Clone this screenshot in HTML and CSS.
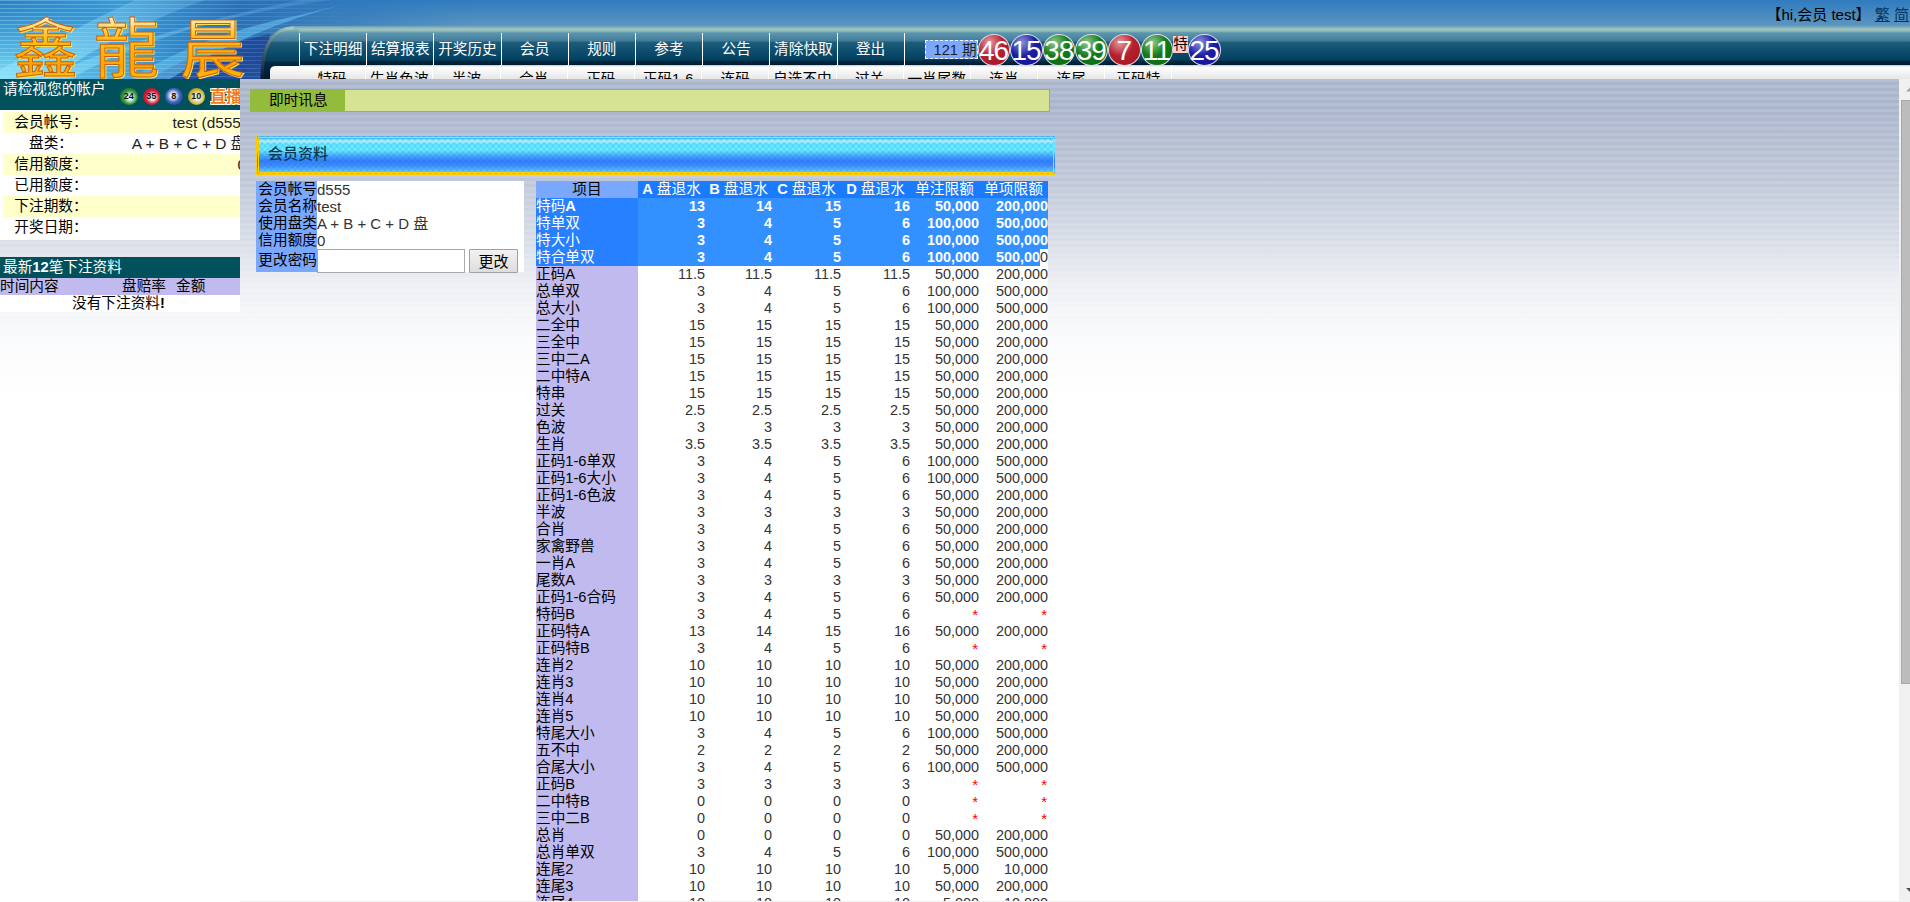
FILE: index.html
```html
<!DOCTYPE html>
<html lang="zh-CN">
<head>
<meta charset="utf-8">
<title>会员资料</title>
<link rel="stylesheet" href="styles.css">
</head>
<body>
<header class="top">
  <svg class="banner" width="480" height="79" viewBox="0 0 480 79">
    <defs>
      <linearGradient id="sky" x1="0" y1="0" x2="1" y2="0">
        <stop offset="0" stop-color="#2c7fc4"/><stop offset=".25" stop-color="#3a9ad8"/><stop offset=".5" stop-color="#2b6fb8"/><stop offset="1" stop-color="#2f7bbf" stop-opacity="0"/>
      </linearGradient>
      <radialGradient id="glow" cx="0" cy="1" r="1"><stop offset="0" stop-color="#7fe6fb"/><stop offset="1" stop-color="#4db8ea" stop-opacity="0"/></radialGradient>
      <linearGradient id="ray" x1="0" y1="1" x2="1" y2="0"><stop offset="0" stop-color="#8be4fa" stop-opacity=".85"/><stop offset="1" stop-color="#7cc4ec" stop-opacity=".25"/></linearGradient>
      <linearGradient id="gold" x1="0" y1="0" x2="0" y2="1">
        <stop offset="0" stop-color="#e08a30"/><stop offset=".2" stop-color="#fff4dc"/><stop offset=".42" stop-color="#ffc020"/><stop offset=".75" stop-color="#ffa200"/><stop offset="1" stop-color="#ffe030"/>
      </linearGradient>
      <pattern id="scan" width="4" height="4" patternUnits="userSpaceOnUse"><rect width="4" height="1" fill="#9fe0fa" opacity=".4"/></pattern>
      <linearGradient id="fade"><stop offset="0" stop-color="#fff"/><stop offset=".45" stop-color="#999"/><stop offset=".75" stop-color="#000"/></linearGradient>
      <mask id="left"><rect width="480" height="79" fill="url(#fade)"/></mask>
      <clipPath id="edge"><path d="M0 0 H480 V26 H292 Q262 30 262 79 H0Z"/></clipPath>
      <linearGradient id="teal" x1="0" y1="0" x2="0" y2="1"><stop offset="0" stop-color="#92bab9"/><stop offset=".08" stop-color="#5b95b0"/><stop offset=".24" stop-color="#427c98"/><stop offset=".27" stop-color="#1f5d7c"/><stop offset=".5" stop-color="#0b4a6a"/><stop offset=".64" stop-color="#04405f"/><stop offset=".67" stop-color="#022b46"/><stop offset="1" stop-color="#021a2c"/></linearGradient>
      <linearGradient id="rim" x1="0" y1="1" x2=".8" y2="0"><stop offset="0" stop-color="#071c33"/><stop offset="1" stop-color="#a5c8c0"/></linearGradient>
      <linearGradient id="tab" x1="0" y1="0" x2="0" y2="1"><stop offset="0" stop-color="#fff"/><stop offset="1" stop-color="#e6e6e6"/></linearGradient>
    </defs>
    <path d="M262 79 Q262 29 292 29 H299 V79Z" fill="url(#teal)"/>
    <g clip-path="url(#edge)">
      <rect width="480" height="79" fill="url(#sky)"/>
      <rect width="190" height="79" fill="url(#glow)"/>
      <path d="M0 79 L0 70 Q70 30 135 0 L205 0 Q120 30 50 79Z" fill="url(#ray)"/>
      <path d="M70 79 Q170 22 330 0 L300 0 Q150 30 40 79Z" fill="url(#ray)" opacity=".7"/>
      <path d="M150 79 Q200 48 270 34 L262 79Z" fill="#1d3a90" opacity=".7"/>
      <path d="M130 79 Q200 35 300 15 L345 4 Q250 28 170 79Z" fill="#62bfee" opacity=".6"/>
      <rect width="480" height="79" fill="url(#scan)" mask="url(#left)"/>
    </g>
    <path d="M262 79 Q262 28 294 28" fill="none" stroke="url(#rim)" stroke-width="3"/>
    <path d="M270 79 V71 Q270 66 276 66 H300 V79Z" fill="url(#tab)"/>
    <g class="brand">
      <text x="13" y="72">鑫</text>
      <text x="94" y="72">龍</text>
      <text x="180" y="72">晨</text>
    </g>
  </svg>
  <div class="hello">【hi,会员 test】 <a>繁</a> <a>简</a></div>
  <nav class="menu">
    <a>下注明细</a><a>结算报表</a><a>开奖历史</a><a>会员</a><a>规则</a><a>参考</a><a>公告</a><a>清除快取</a><a>登出</a>
    <div class="draw">
      <span class="issue">121 期</span>
      <i class="ball red">46</i><i class="ball blue">15</i><i class="ball green">38</i><i class="ball green">39</i><i class="ball red">7</i><i class="ball green">11</i><span class="special">特</span><i class="ball blue">25</i>
    </div>
  </nav>
  <nav class="submenu">
    <a>特码</a><a>生肖色波</a><a>半波</a><a>合肖</a><a>正码</a><a>正码1-6</a><a>连码</a><a>自选不中</a><a>过关</a><a>一肖尾数</a><a>连肖</a><a>连尾</a><a>正码特</a>
  </nav>
</header>
<div class="frames">
  <aside class="side">
    <div class="account-head"><span>请检视您的帐户</span>
      <div class="minis"><i class="mini m1">24</i><i class="mini m2">35</i><i class="mini m3">8</i><i class="mini m4">10</i></div><b class="live">直播</b>
    </div>
    <div class="account">
      <div class="line"><span>会员帐号：</span><em>test (d555)</em></div>
      <div class="line"><span>盘类：</span><em>A + B + C + D 盘</em></div>
      <div class="line"><span>信用额度：</span><em>0</em></div>
      <div class="line"><span>已用额度：</span></div>
      <div class="line"><span>下注期数：</span></div>
      <div class="line"><span>开奖日期：</span></div>
    </div>
    <div class="recent-head">最新<b>12</b>笔下注资料</div>
    <div class="recent-cols"><span>时间内容</span><span>盘赔率</span><span>金额</span></div>
    <div class="recent-none">没有下注资料<b>!</b></div>
  </aside>
  <main class="main">
    <div class="notice"><span>即时讯息</span></div>
    <h1 class="title">会员资料</h1>
    <div class="content">
      <table class="info">
        <tr><th>会员帐号<td>d555
        <tr><th>会员名称<td>test
        <tr><th>使用盘类<td>A + B + C + D 盘
        <tr><th>信用额度<td>0
        <tr class="pw"><th>更改密码<td><div class="form"><input type="text"><button>更改</button></div>
      </table>
      <table class="limits">
        <colgroup><col class="c0"><col class="c1"><col class="c1"><col class="c2"><col class="c2"><col class="c2"><col class="c2"></colgroup>
        <tr class="head"><th>项目<th><b>A</b> 盘退水<th><b>B</b> 盘退水<th><b>C</b> 盘退水<th><b>D</b> 盘退水<th>单注限额<th>单项限额
        <tr class="sel"><th>特码<b>A</b><td>13<td>14<td>15<td>16<td>50,000<td>200,000
        <tr class="sel"><th>特单双<td>3<td>4<td>5<td>6<td>100,000<td>500,000
        <tr class="sel"><th>特大小<td>3<td>4<td>5<td>6<td>100,000<td>500,000
        <tr class="sel"><th>特合单双<td>3<td>4<td>5<td>6<td>100,000<td>500,00<span class="unsel">0</span>
        <tr><th>正码A<td>11.5<td>11.5<td>11.5<td>11.5<td>50,000<td>200,000
        <tr><th>总单双<td>3<td>4<td>5<td>6<td>100,000<td>500,000
        <tr><th>总大小<td>3<td>4<td>5<td>6<td>100,000<td>500,000
        <tr><th>二全中<td>15<td>15<td>15<td>15<td>50,000<td>200,000
        <tr><th>三全中<td>15<td>15<td>15<td>15<td>50,000<td>200,000
        <tr><th>三中二A<td>15<td>15<td>15<td>15<td>50,000<td>200,000
        <tr><th>二中特A<td>15<td>15<td>15<td>15<td>50,000<td>200,000
        <tr><th>特串<td>15<td>15<td>15<td>15<td>50,000<td>200,000
        <tr><th>过关<td>2.5<td>2.5<td>2.5<td>2.5<td>50,000<td>200,000
        <tr><th>色波<td>3<td>3<td>3<td>3<td>50,000<td>200,000
        <tr><th>生肖<td>3.5<td>3.5<td>3.5<td>3.5<td>50,000<td>200,000
        <tr><th>正码1-6单双<td>3<td>4<td>5<td>6<td>100,000<td>500,000
        <tr><th>正码1-6大小<td>3<td>4<td>5<td>6<td>100,000<td>500,000
        <tr><th>正码1-6色波<td>3<td>4<td>5<td>6<td>50,000<td>200,000
        <tr><th>半波<td>3<td>3<td>3<td>3<td>50,000<td>200,000
        <tr><th>合肖<td>3<td>4<td>5<td>6<td>50,000<td>200,000
        <tr><th>家禽野兽<td>3<td>4<td>5<td>6<td>50,000<td>200,000
        <tr><th>一肖A<td>3<td>4<td>5<td>6<td>50,000<td>200,000
        <tr><th>尾数A<td>3<td>3<td>3<td>3<td>50,000<td>200,000
        <tr><th>正码1-6合码<td>3<td>4<td>5<td>6<td>50,000<td>200,000
        <tr><th>特码B<td>3<td>4<td>5<td>6<td class="none">*<td class="none">*
        <tr><th>正码特A<td>13<td>14<td>15<td>16<td>50,000<td>200,000
        <tr><th>正码特B<td>3<td>4<td>5<td>6<td class="none">*<td class="none">*
        <tr><th>连肖2<td>10<td>10<td>10<td>10<td>50,000<td>200,000
        <tr><th>连肖3<td>10<td>10<td>10<td>10<td>50,000<td>200,000
        <tr><th>连肖4<td>10<td>10<td>10<td>10<td>50,000<td>200,000
        <tr><th>连肖5<td>10<td>10<td>10<td>10<td>50,000<td>200,000
        <tr><th>特尾大小<td>3<td>4<td>5<td>6<td>100,000<td>500,000
        <tr><th>五不中<td>2<td>2<td>2<td>2<td>50,000<td>200,000
        <tr><th>合尾大小<td>3<td>4<td>5<td>6<td>100,000<td>500,000
        <tr><th>正码B<td>3<td>3<td>3<td>3<td class="none">*<td class="none">*
        <tr><th>二中特B<td>0<td>0<td>0<td>0<td class="none">*<td class="none">*
        <tr><th>三中二B<td>0<td>0<td>0<td>0<td class="none">*<td class="none">*
        <tr><th>总肖<td>0<td>0<td>0<td>0<td>50,000<td>200,000
        <tr><th>总肖单双<td>3<td>4<td>5<td>6<td>100,000<td>500,000
        <tr><th>连尾2<td>10<td>10<td>10<td>10<td>5,000<td>10,000
        <tr><th>连尾3<td>10<td>10<td>10<td>10<td>50,000<td>200,000
        <tr><th>连尾4<td>10<td>10<td>10<td>10<td>5,000<td>10,000
      </table>
    </div>
  </main>
  <div class="scroll">
    <svg width="11" height="21" viewBox="0 0 11 21"><path d="M7 12.5 L11 8.5 V12.5Z" fill="#a3a3a3"/></svg>
    <div class="thumb"></div>
    <svg width="11" height="15" viewBox="0 0 11 15"><path d="M7 1 H11 V5Z" fill="#505050"/></svg>
  </div>
</div>
</body>
</html>
```
FILE: styles.css
```css
* { box-sizing: border-box; }
body {
  margin: 0;
  width: 1910px;
  height: 902px;
  overflow: hidden;
  font: 14.67px/17px "Liberation Sans", "Noto Sans CJK SC", sans-serif;
  color: #000;
  background: #fff;
}
i, em { font-style: normal; }

/* header */
.top {
  position: relative;
  height: 79px;
  overflow: hidden;
  background: linear-gradient(#2f7bbf 0, #5b95c0 25px, #79aabb 27px, #a3c6bd 29px, #92bab9 31px, #5b95b0 33px, #427c98 41px, #1f5d7c 42px, #0b4a6a 53px, #04405f 60px, #022b46 61px, #021a2c 65px, #c3cad0 65px, #fff 67px, #e6e6e6 79px);
}
.banner { position: absolute; top: 0; left: 0; }
.brand text {
  font: 400 65px "Noto Sans CJK TC", sans-serif;
  fill: url(#gold);
  stroke: #c8600c;
  stroke-width: 1px;
  filter: drop-shadow(1px 1px 0 #ffe14a);
}
.hello {
  position: absolute;
  top: 6px;
  right: 1px;
  white-space: pre;
  font-size: 15px;
}
.hello a { color: #003468; text-decoration: underline; }
.menu { position: absolute; top: 33px; left: 299px; display: flex; height: 32px; }
.menu > a {
  width: 67.2px;
  border-left: 1px solid #fff;
  color: #fff;
  text-align: center;
  line-height: 32px;
  white-space: nowrap;
}
.draw { display: flex; align-items: flex-start; border-left: 1px solid #fff; padding-left: 20px; }
.issue {
  width: 53px;
  height: 19px;
  margin-top: 7px;
  background: #7aa8ff;
  border: 1px dashed #fff;
  text-align: right;
  white-space: nowrap;
  line-height: 18px;
  color: #222;
}
.ball {
  width: 32.6px;
  height: 32px;
  margin-top: 1px;
  border: 1px solid #dde;
  border-radius: 50%;
  color: #fff;
  text-align: center;
  font-size: 28px;
  line-height: 31px;
  letter-spacing: -1px;
  text-indent: -1px;
}
.red { background: radial-gradient(circle at 35% 25%, #e79a9f, #b5202e 45%, #a01525); }
.blue { background: radial-gradient(circle at 35% 25%, #8f90dc, #1c1fa4 45%, #10128c); }
.green { background: radial-gradient(circle at 35% 25%, #8fc98f, #137a17 45%, #0a680d); }
.special { width: 15px; height: 17px; margin-top: 3px; background: #ffcccc; line-height: 16px; }
.submenu { position: absolute; top: 65px; left: 299px; display: flex; height: 30px; }
.submenu a {
  width: 67.2px;
  border-right: 1px solid #fff;
  text-align: center;
  white-space: nowrap;
  line-height: 29px;
}

/* frames */
.frames { display: grid; grid-template-columns: 240px 1659px 11px; height: 823px; }
.side, .main {
  overflow: hidden;
  background:
    linear-gradient(rgba(255, 255, 255, 0) 30px, rgba(255, 255, 255, .22) 96px, rgba(255, 255, 255, .55) 165px, rgba(255, 255, 255, .78) 205px, rgba(255, 255, 255, .92) 250px, #fff 315px),
    repeating-linear-gradient(#b4bfd3 0 3px, #acb6cb 3px 6px);
}

/* account sidebar */
.account-head {
  position: relative;
  height: 31px;
  padding: 2px 3px;
  background: #00515c;
  color: #fff;
}
.minis { position: absolute; left: 120px; top: 9px; display: flex; gap: 5px; }
.mini {
  width: 17.5px;
  height: 17px;
  border-radius: 50%;
  font: bold 9px/17px "Liberation Sans", sans-serif;
  text-align: center;
  color: #111;
}
.m1 { background: radial-gradient(circle at 55% 55%, #eee 20%, #2c9a3c 50%, #0c4a18); }
.m2 { background: radial-gradient(circle at 55% 55%, #eee 20%, #d8203c 50%, #7a0c1c); }
.m3 { background: radial-gradient(circle at 45% 45%, #eee 20%, #3a66c0 50%, #12265c); }
.m4 { background: radial-gradient(circle at 55% 55%, #eee 20%, #d8c040 50%, #6e5c0c); }
.live {
  position: absolute;
  left: 210px;
  top: 9px;
  width: 30px;
  height: 17px;
  overflow: hidden;
  white-space: nowrap;
  font-size: 16px;
  line-height: 17px;
  color: #f47a20;
  text-shadow: 0 0 1px #fff, 1px 1px 0 #fff, -1px -1px 0 #fff, 1px -1px 0 #fff, -1px 1px 0 #fff;
}
.account { width: 246px; height: 130px; padding: 2px 0 0 3px; background: #fff; }
.line { display: flex; height: 21px; line-height: 21px; }
.line:nth-child(odd) { background: #ffffcc; }
.line span { width: 96px; text-align: center; }
.line em { flex: 1; text-align: right; white-space: nowrap; color: #222; font-size: 15.4px; }
.recent-head { height: 21px; margin-top: 17px; padding-left: 3px; background: #00515c; color: #fff; line-height: 21px; }
.recent-cols { display: grid; grid-template-columns: 122px 54px 1fr; background: #c0baee; }
.recent-none { padding-left: 72px; background: #fff; }

/* content */
.main { padding: 10px 0 0 10px; border-bottom: 1px solid #f0f0f0; }
.notice { width: 800px; height: 23px; background: #d6e395; border: 1px solid #94bc3c; display: flex; }
.notice span { width: 94px; background: #94bc3c; padding-left: 18px; line-height: 21px; }
.title {
  width: 800px;
  height: 40px;
  margin: 23px 0 0 6px;
  padding-left: 9px;
  border: 3px double #fc0;
  font-size: 15px;
  font-weight: 500;
  line-height: 31px;
  color: #063a50;
  background:
    radial-gradient(circle, rgba(20, 70, 220, .22), transparent 2.5px) 0 14px / 6px 6px,
    radial-gradient(circle, rgba(20, 70, 220, .22), transparent 2.5px) 3px 17px / 6px 6px,
    linear-gradient(#30c8f0 0, #c8f8ff 3px, #62eaff 6px, #6cf0ff 12px, #46aaff 18px, #3580fa 23px, #3f92ff 28px, #6aeafa 36px);
}
.content { display: flex; align-items: flex-start; gap: 12px; padding: 6px 0 0 6px; }
table { border-collapse: collapse; table-layout: fixed; }
th, td { padding: 0; height: 17px; line-height: 17px; font-weight: normal; white-space: nowrap; }
.info { width: 268px; background: #fff; }
.info th { width: 61px; background: #7aa8ff; text-align: right; }
.info td { color: #333; font-size: 15px; }
.info .pw th, .info .pw td { height: 23px; }
.form { display: flex; gap: 4px; height: 23px; }
.form input { width: 148px; height: 24px; margin: 0; border: 1px solid #a9a9a9; background: #fff; }
.form button {
  width: 49px;
  height: 24px;
  padding: 0;
  border: 1px solid #a0a0a0;
  border-radius: 1px;
  background: linear-gradient(#f2f2f2, #ddd);
  font: inherit;
}
.limits { width: 512px; background: #fff; }
.c0 { width: 102px; }
.c1 { width: 67px; }
.c2 { width: 69px; }
.limits th { background: #c0baee; text-align: left; }
.limits td { text-align: right; color: #333; font-size: 14.4px; }
.limits .head th { background: #1a7bff; color: #fff; text-align: center; }
.limits .head th:first-child { background: #7aa8ff; color: #000; }
.limits .sel th { background: #2780ff; color: #fff; }
.limits .sel td { background: #3390ff; color: #fff; font-weight: bold; }
.limits .sel .unsel { display: inline-block; height: 17px; vertical-align: top; background: #fff; color: #333; font-weight: normal; }
.limits .none { color: #f00; font-size: 15px; padding-right: 1px; }

/* scroll bar */
.scroll { background: #f0f0f0; display: flex; flex-direction: column; }
.thumb { height: 584px; margin: 0 0 203px 2px; background: #bcbcbc; border: 1px solid #a8a8a8; border-right: 0; }
.scroll svg { flex: none; }
```
